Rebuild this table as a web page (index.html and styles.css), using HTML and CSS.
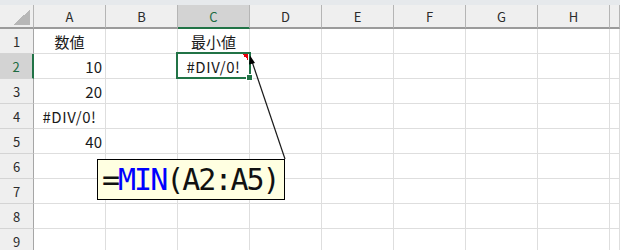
FILE: index.html
```html
<!DOCTYPE html>
<html lang="ja">
<head>
    <meta charset="UTF-8">
    <meta name="viewport" content="width=device-width, initial-scale=1.0">
    <title>MIN関数</title>
    <link rel="stylesheet" href="styles.css">
</head>
<body>
    <div class="book">
        <div class="ribbon-edge"></div>

        <div class="sheet">
            <!-- column headers -->
            <div class="hd corner"><span class="corner-mark"></span></div>
            <div class="hd">A</div>
            <div class="hd">B</div>
            <div class="hd active-col">C</div>
            <div class="hd">D</div>
            <div class="hd">E</div>
            <div class="hd">F</div>
            <div class="hd">G</div>
            <div class="hd">H</div>
            <div class="hd"></div>

            <div class="rh">1</div>
            <div class="c center">数値</div><div class="c"></div><div class="c center">最小値</div><div class="c"></div><div class="c"></div><div class="c"></div><div class="c"></div><div class="c"></div><div class="c"></div>

            <div class="rh active-row">2</div>
            <div class="c num">10</div><div class="c"></div><div class="c center err">#DIV/0!</div><div class="c"></div><div class="c"></div><div class="c"></div><div class="c"></div><div class="c"></div><div class="c"></div>

            <div class="rh">3</div>
            <div class="c num">20</div><div class="c"></div><div class="c"></div><div class="c"></div><div class="c"></div><div class="c"></div><div class="c"></div><div class="c"></div><div class="c"></div>

            <div class="rh">4</div>
            <div class="c center err">#DIV/0!</div><div class="c"></div><div class="c"></div><div class="c"></div><div class="c"></div><div class="c"></div><div class="c"></div><div class="c"></div><div class="c"></div>

            <div class="rh">5</div>
            <div class="c num">40</div><div class="c"></div><div class="c"></div><div class="c"></div><div class="c"></div><div class="c"></div><div class="c"></div><div class="c"></div><div class="c"></div>

            <div class="rh">6</div>
            <div class="c"></div><div class="c"></div><div class="c"></div><div class="c"></div><div class="c"></div><div class="c"></div><div class="c"></div><div class="c"></div><div class="c"></div>

            <div class="rh">7</div>
            <div class="c"></div><div class="c"></div><div class="c"></div><div class="c"></div><div class="c"></div><div class="c"></div><div class="c"></div><div class="c"></div><div class="c"></div>

            <div class="rh">8</div>
            <div class="c"></div><div class="c"></div><div class="c"></div><div class="c"></div><div class="c"></div><div class="c"></div><div class="c"></div><div class="c"></div><div class="c"></div>

            <div class="rh">9</div>
            <div class="c"></div><div class="c"></div><div class="c"></div><div class="c"></div><div class="c"></div><div class="c"></div><div class="c"></div><div class="c"></div><div class="c"></div>
        </div>

        <!-- active cell C2 -->
        <div class="selection">
            <span class="note-mark"></span>
            <span class="fill-handle"></span>
        </div>

        <!-- leader line from the note to the formula box -->
        <svg class="leader" width="620" height="250" viewBox="0 0 620 250">
            <line x1="251.5" y1="60" x2="285" y2="159" stroke="#1a1a1a" stroke-width="1.2"/>
            <polygon points="250,55.5 255,63 249,64.5" fill="#000"/>
        </svg>

        <div class="formula-note">=<span class="fn">MIN</span>(A2:A5)</div>
    </div>
</body>
</html>
```

FILE: styles.css
```css
* {
    box-sizing: border-box;
}

body {
    margin: 0;
    background-color: #ffffff;
    font-family: 'Noto Sans CJK JP', 'Noto Sans', sans-serif;
    color: #1a1a1a;
    overflow: hidden;
}

.book {
    position: relative;
    width: 620px;
    height: 250px;
    overflow: hidden;
}

.ribbon-edge {
    height: 5px;
    background-color: #e6e9ec;
}

.sheet {
    display: grid;
    grid-template-columns: 34px repeat(8, 72px) 1fr;
    grid-template-rows: 24px;
    grid-auto-rows: 25px;
}

.hd {
    display: flex;
    align-items: center;
    justify-content: center;
    background-color: #efefef;
    border-right: 1px solid #b5b5b5;
    border-bottom: 2px solid #9b9b9b;
    font-size: 13px;
    color: #2b2b2b;
}

.corner {
    position: relative;
}

.corner-mark {
    position: absolute;
    left: 14px;
    top: 4px;
    width: 16px;
    height: 16px;
    background: linear-gradient(135deg, transparent 50%, #b7b7b7 50%);
}

.active-col {
    background-color: #d3d3d3;
    color: #1e6b41;
    border-bottom: 2px solid #217346;
}

.rh {
    display: flex;
    align-items: center;
    justify-content: center;
    background-color: #efefef;
    border-right: 1px solid #a6a6a6;
    border-bottom: 1px solid #d4d4d4;
    font-size: 13px;
    color: #2b2b2b;
}

.active-row {
    background-color: #d3d3d3;
    color: #1e6b41;
    border-right: 2px solid #217346;
}

.c {
    display: flex;
    align-items: center;
    padding: 0 3px;
    border-right: 1px solid #dedede;
    border-bottom: 1px solid #dedede;
    font-size: 15px;
}

.num {
    justify-content: flex-end;
}

.center {
    justify-content: center;
}

.err {
    letter-spacing: 0.6px;
}

.selection {
    position: absolute;
    left: 176px;
    top: 52px;
    width: 75px;
    height: 27px;
    border: 2px solid #217346;
}

.note-mark {
    position: absolute;
    right: 1px;
    top: 0;
    width: 6px;
    height: 6px;
    background: linear-gradient(45deg, transparent 50%, #e8000b 50%);
}

.fill-handle {
    position: absolute;
    right: -4px;
    bottom: -4px;
    width: 7px;
    height: 7px;
    background-color: #217346;
    border: 1px solid #ffffff;
}

.leader {
    position: absolute;
    left: 0;
    top: 0;
}

.formula-note {
    position: absolute;
    left: 97px;
    top: 159px;
    width: 188px;
    height: 41px;
    padding-left: 4px;
    background-color: #ffffe1;
    border: 1px solid #000000;
    font-family: 'DejaVu Sans Mono', 'Liberation Mono', monospace;
    font-size: 30px;
    letter-spacing: -2px;
    line-height: 39px;
    color: #111111;
}

.fn {
    color: #0000ff;
}
```
